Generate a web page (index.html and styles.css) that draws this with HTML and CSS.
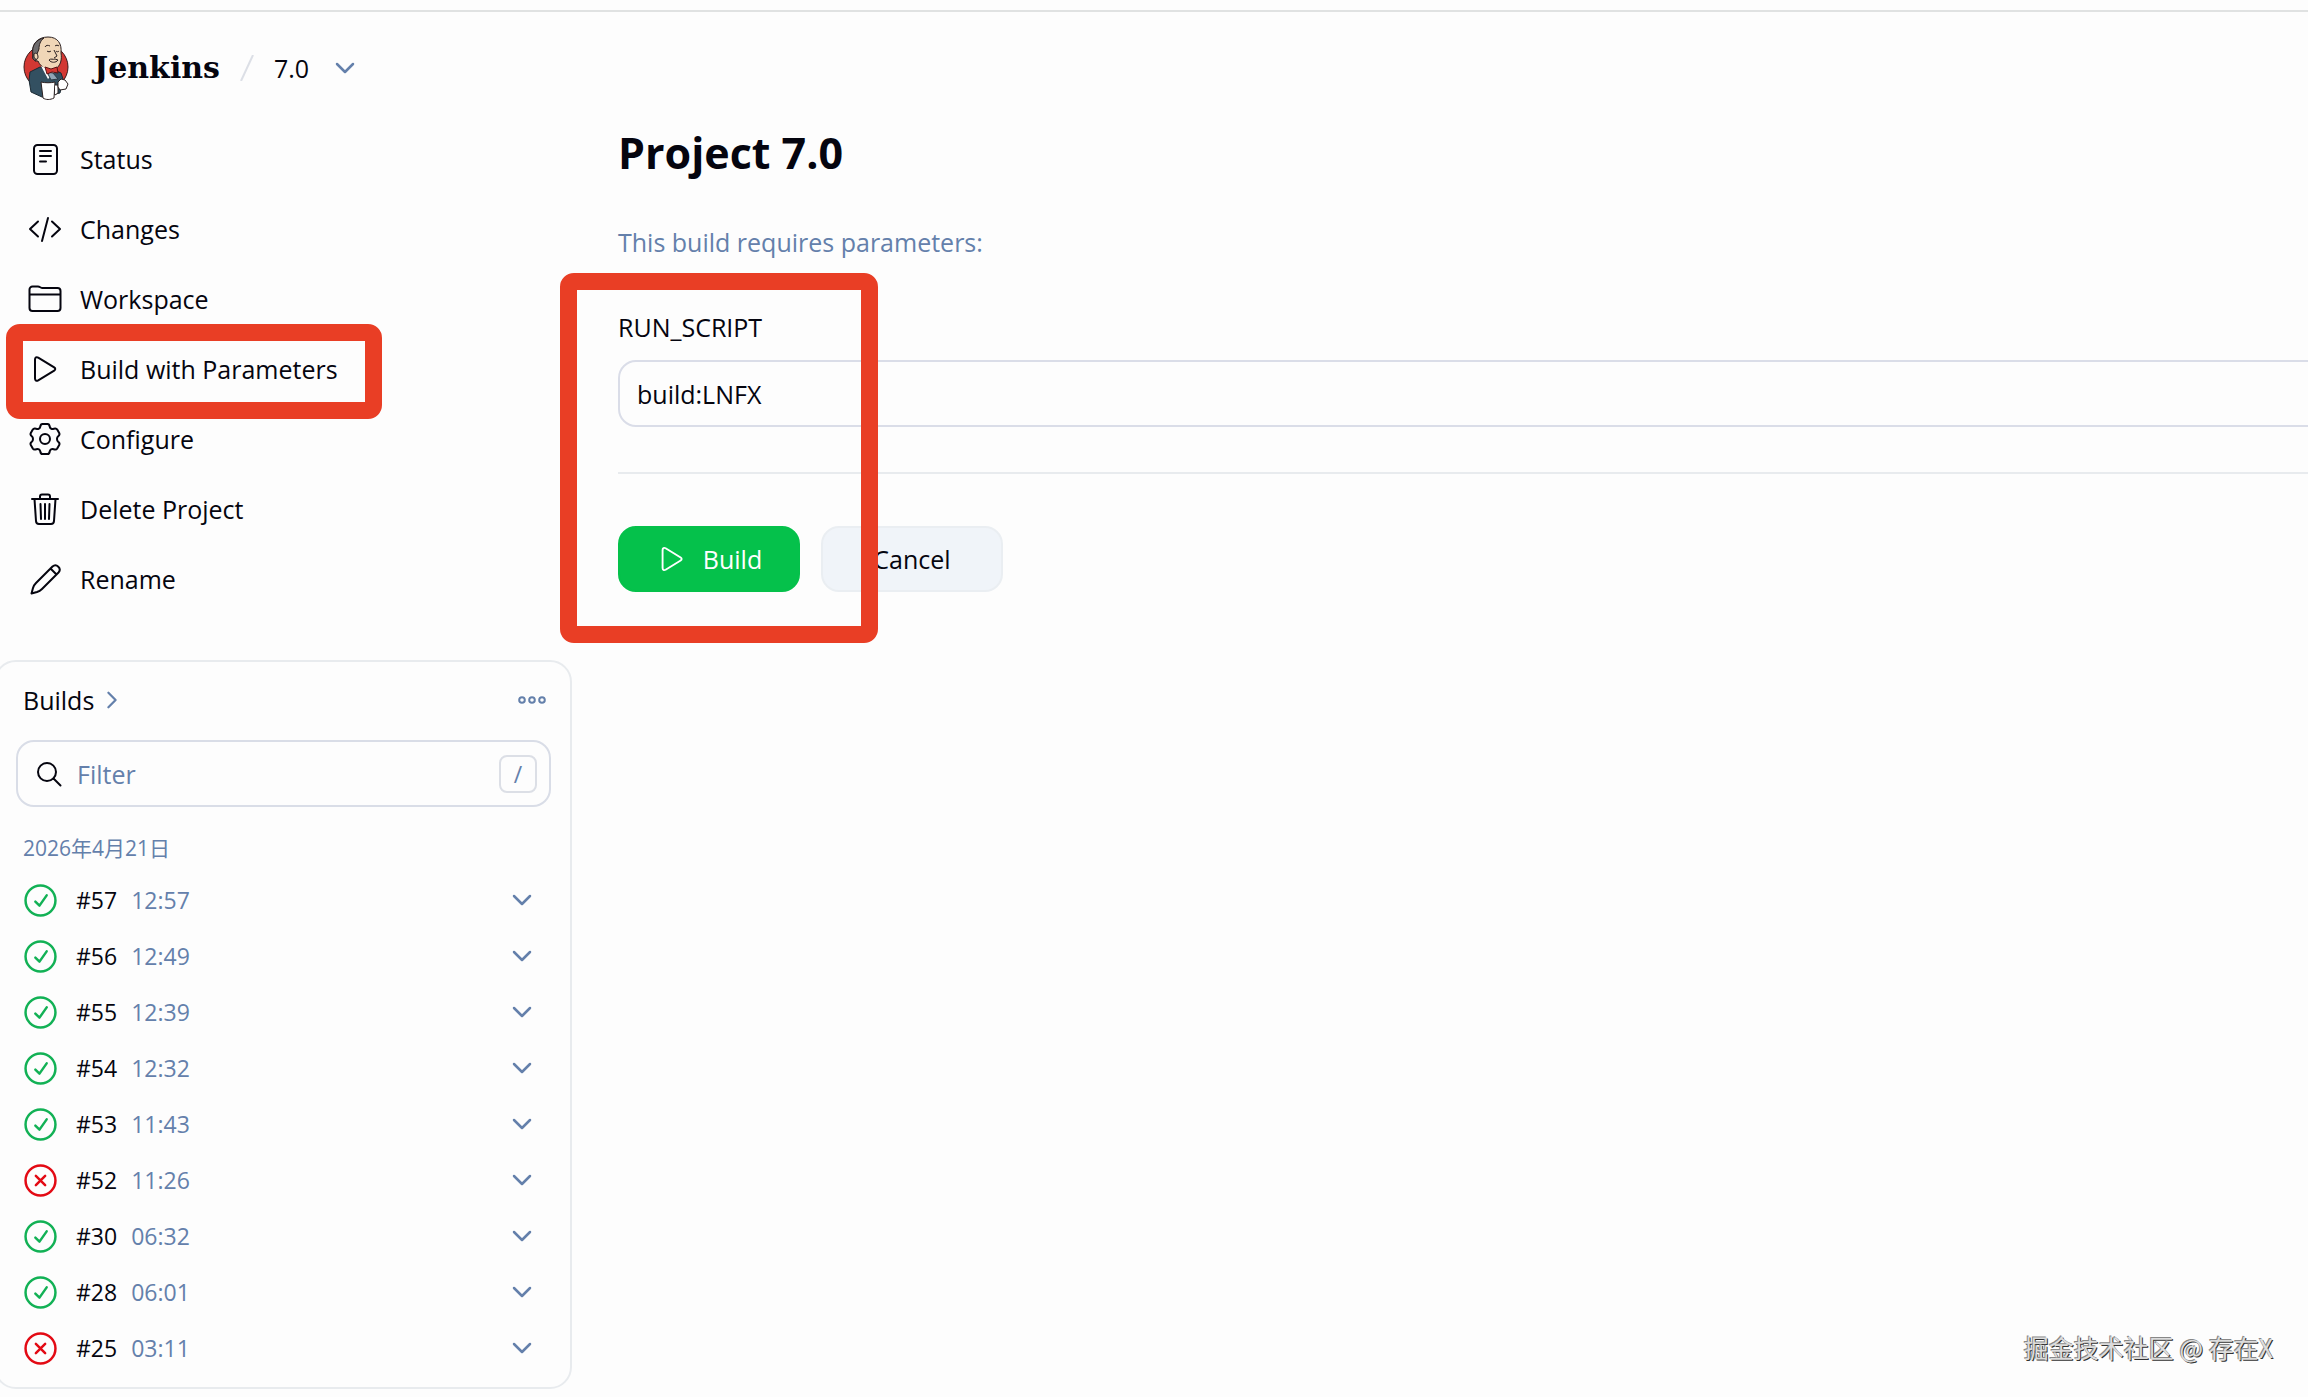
FILE: index.html
```html
<!DOCTYPE html>
<html lang="en">
<head>
  <meta charset="UTF-8" />
  <meta name="viewport" content="width=device-width, initial-scale=1" />
  <title>7.0 - Jenkins</title>
  <link rel="stylesheet" href="styles.css">
</head>
<body>
  <!-- shared icons -->
  <svg class="sprite" aria-hidden="true">
    <symbol id="chevron" viewBox="0 0 20 20"><path d="M2 6l8 8 8-8" /></symbol>
    <symbol id="play" viewBox="0 0 34 34"><path d="M7 7.500v19c0 2 1.500 2.800 3.200 1.900l16-9.800c1.400-.9 1.400-2.300 0-3.200l-16-9.800C8.500 4.700 7 5.500 7 7.500z" /></symbol>
    <symbol id="ok" viewBox="0 0 32 32"><circle cx="16" cy="16" r="14.500" /><path d="M11 17l4 4 7-10" /></symbol>
    <symbol id="fail" viewBox="0 0 32 32"><circle cx="16" cy="16" r="14.500" /><path d="M11.500 11.500l9 9M20.500 11.500l-9 9" /></symbol>
  </svg>

  <header class="header">
    <a href="#" class="brand">
      <svg class="logo" viewBox="0 0 46 64" aria-hidden="true">
        <circle cx="23" cy="31" r="22" fill="#d33833" stroke="#3a1a1a" stroke-width="1" />
        <path d="M7 36l10-5 12 2 9 4 2 6-3 14-18 4-11-5-2-12z" fill="#335061" stroke="#1b2a33" stroke-width="1" />
        <path d="M10 18C8 8 15 1 25 1c10 0 14 7 13 16 1 6 0 13-6 16-7 2-14-1-17-8-4 1-6-3-5-7z" fill="#f0d6b7" stroke="#2b2020" stroke-width="1" />
        <path d="M10 19C8 9 14 3 21 2c-4 3-5 7-5 11l-2 5-1 7c-3-1-4-3-3-6z" fill="#6d6b6d" stroke="#2b2020" stroke-width="1" />
        <path d="M11 18c2-2 4 0 4 3 0 3-3 3-4 0z" fill="#f0d6b7" stroke="#2b2020" stroke-width="1" />
        <path d="M22 11c1-2 3-2 5-1M32 10c1-1 3-1 4 0M24 15c1 1 3 1 4 0M33 15c1 1 2 1 3 0M31 14l3 6-3 2M26 24c2-2 4 0 6-1l3 1c-2 3-7 3-9 0" fill="none" stroke="#2b2020" stroke-width="1" />
        <path d="M18 30l7 3 7 3-7 7z" fill="#fff" />
        <path d="M24 36l6 1 5 6-7 1z" fill="#8fa5b5" stroke="#2b3a44" stroke-width="1" />
        <path d="M22 31l6 2 6-2 1 6-6-1-5 2z" fill="#d33833" stroke="#5a1212" stroke-width="1" />
        <path d="M18 46c4 1 10 1 14 0l-1 16c-4 2-8 2-11 0z" fill="#fff" stroke="#2b2020" stroke-width="1" />
        <path d="M32 49h3v8l-3 2" fill="#fff" stroke="#2b2020" stroke-width="1" />
        <path d="M35 46l3-3 4 1 3 4-2 5-6 1-2-3z" fill="#fff" stroke="#2b2020" stroke-width="1" />
      </svg>
      Jenkins
    </a>
    <svg class="slash" viewBox="0 0 14 26" aria-hidden="true"><path d="M13 0L1 26" /></svg>
    <a href="#" class="crumb">7.0</a>
    <button class="icon-button" aria-label="Project menu"><svg class="icon chevron"><use href="#chevron" /></svg></button>
  </header>

  <div class="page">
    <aside class="sidebar">
      <nav class="tasks">
        <a href="#" class="task">
          <svg class="icon" viewBox="0 0 34 34"><rect x="6" y="3" width="23" height="29" rx="3.500" /><path d="M12 9h11M12 14h11M12 19.500h6" /></svg>
          Status
        </a>
        <a href="#" class="task">
          <svg class="icon" viewBox="0 0 34 34"><path d="M10 9.500L2 17l8 7.500M24 9.500l8 7.500-8 7.500M20 6l-6 23" /></svg>
          Changes
        </a>
        <a href="#" class="task">
          <svg class="icon" viewBox="0 0 34 34"><path d="M1.500 25.500v-18a3 3 0 0 1 3-3h5.500c2 0 2.500 1.500 4.500 1.500h15a3 3 0 0 1 3 3v17a3 3 0 0 1-3 3h-25a3 3 0 0 1-3-3zM1.500 12.500h31" /></svg>
          Workspace
        </a>
        <a href="#" class="task marked">
          <svg class="icon"><use href="#play" /></svg>
          Build with Parameters
        </a>
        <a href="#" class="task">
          <svg class="icon" viewBox="0 0 34 34"><circle cx="17" cy="17" r="5" /><path d="M14.500 2h5c1.500 0 2 1 2.200 2.500.3 2 2 3 4 2.300 1.500-.6 2.700-.6 3.500.7l2 3.500c.7 1.300.2 2.300-1 3.200-1.600 1.300-1.600 4.300 0 5.600 1.200.9 1.700 1.900 1 3.200l-2 3.500c-.8 1.300-2 1.300-3.500.7-2-.7-3.700.3-4 2.300-.2 1.500-.7 2.500-2.200 2.500h-5c-1.500 0-2-1-2.200-2.500-.3-2-2-3-4-2.300-1.500.6-2.700.6-3.500-.7l-2-3.500c-.7-1.300-.2-2.300 1-3.200 1.600-1.300 1.600-4.300 0-5.600-1.200-.9-1.700-1.900-1-3.200l2-3.500c.8-1.300 2-1.300 3.500-.7 2 .7 3.700-.3 4-2.300C12.500 3 13 2 14.500 2z" /></svg>
          Configure
        </a>
        <a href="#" class="task">
          <svg class="icon" viewBox="0 0 34 34"><path d="M4 7h26M12 7V4.500C12 3 13 2.500 14 2.500h6c1 0 2 .5 2 2V7M6.500 7l1.500 22c.1 2 1 3 3 3h12c2 0 2.900-1 3-3L27.500 7M12.500 12l.5 15M17 12v15M21.500 12L21 27" /></svg>
          Delete Project
        </a>
        <a href="#" class="task">
          <svg class="icon" viewBox="0 0 34 34"><path d="M22.500 6.500L8 21c-1.500 1.500-2.500 3-3 5l-1.500 5.500L9 30c2-.6 3.500-1.500 5-3l14.500-14.500 2-2c3.500-4-2-9.500-6-6zM22.500 6.500l6 6" /></svg>
          Rename
        </a>
      </nav>

      <section class="builds">
        <div class="builds-head">
          <a href="#" class="builds-title">Builds <svg class="icon next"><use href="#chevron" /></svg></a>
          <button class="icon-button" aria-label="More actions">
            <svg class="icon dots" viewBox="0 0 28 10"><circle cx="4" cy="5" r="2.800" /><circle cx="14" cy="5" r="2.800" /><circle cx="24" cy="5" r="2.800" /></svg>
          </button>
        </div>
        <div class="search">
          <svg class="icon search-icon" viewBox="0 0 26 26"><circle cx="11" cy="11" r="9" /><path d="M17.500 17.500l7 7" /></svg>
          <input type="search" placeholder="Filter" aria-label="Filter builds" />
          <kbd>/</kbd>
        </div>
        <h2 class="date">2026年4月21日</h2>
        <ul class="build-list">
          <li><svg class="icon ok"><use href="#ok" /></svg><a href="#">#57</a><time>12:57</time><button class="icon-button" aria-label="Menu for #57"><svg class="icon chevron"><use href="#chevron" /></svg></button></li>
          <li><svg class="icon ok"><use href="#ok" /></svg><a href="#">#56</a><time>12:49</time><button class="icon-button" aria-label="Menu for #56"><svg class="icon chevron"><use href="#chevron" /></svg></button></li>
          <li><svg class="icon ok"><use href="#ok" /></svg><a href="#">#55</a><time>12:39</time><button class="icon-button" aria-label="Menu for #55"><svg class="icon chevron"><use href="#chevron" /></svg></button></li>
          <li><svg class="icon ok"><use href="#ok" /></svg><a href="#">#54</a><time>12:32</time><button class="icon-button" aria-label="Menu for #54"><svg class="icon chevron"><use href="#chevron" /></svg></button></li>
          <li><svg class="icon ok"><use href="#ok" /></svg><a href="#">#53</a><time>11:43</time><button class="icon-button" aria-label="Menu for #53"><svg class="icon chevron"><use href="#chevron" /></svg></button></li>
          <li><svg class="icon fail"><use href="#fail" /></svg><a href="#">#52</a><time>11:26</time><button class="icon-button" aria-label="Menu for #52"><svg class="icon chevron"><use href="#chevron" /></svg></button></li>
          <li><svg class="icon ok"><use href="#ok" /></svg><a href="#">#30</a><time>06:32</time><button class="icon-button" aria-label="Menu for #30"><svg class="icon chevron"><use href="#chevron" /></svg></button></li>
          <li><svg class="icon ok"><use href="#ok" /></svg><a href="#">#28</a><time>06:01</time><button class="icon-button" aria-label="Menu for #28"><svg class="icon chevron"><use href="#chevron" /></svg></button></li>
          <li><svg class="icon fail"><use href="#fail" /></svg><a href="#">#25</a><time>03:11</time><button class="icon-button" aria-label="Menu for #25"><svg class="icon chevron"><use href="#chevron" /></svg></button></li>
        </ul>
      </section>
    </aside>

    <main class="main">
      <h1>Project 7.0</h1>
      <p class="hint">This build requires parameters:</p>
      <form class="params" onsubmit="return false">
        <label for="run-script">RUN_SCRIPT</label>
        <input type="text" id="run-script" value="build:LNFX" />
        <div class="actions">
          <button type="submit" class="button primary"><svg class="icon"><use href="#play" /></svg>Build</button>
          <button type="button" class="button">Cancel</button>
        </div>
      </form>
    </main>
  </div>

  <div class="watermark">掘金技术社区 @ 存在X</div>
</body>
</html>
```
FILE: styles.css
```css
* {
  box-sizing: border-box;
}
body {
  margin: 0;
  padding-top: 10px;
  min-height: 100vh;
  overflow-x: hidden;
  background: #fdfdfd;
  color: #05050f;
  font-family: "Open Sans", "Noto Sans CJK SC", sans-serif;
  font-size: 25px;
  line-height: 34px;
}
a {
  color: inherit;
  text-decoration: none;
}
input,
button {
  font: inherit;
  color: inherit;
}
.sprite {
  position: absolute;
  width: 0;
  height: 0;
}
.icon {
  flex: none;
  width: 34px;
  height: 34px;
  fill: none;
  stroke: currentColor;
  stroke-width: 2;
  stroke-linecap: round;
  stroke-linejoin: round;
}
.icon-button {
  display: flex;
  padding: 0;
  border: 0;
  background: none;
  color: #6480ab;
  cursor: pointer;
}

/* header */
.header {
  display: flex;
  align-items: center;
  height: 114px;
  padding: 0 23px;
  border-top: 2px solid #e0e2e2;
}
.brand {
  display: flex;
  align-items: center;
  gap: 25px;
  font-family: "DejaVu Serif", serif;
  font-size: 30px;
  font-weight: bold;
}
.logo {
  width: 46px;
  height: 64px;
}
.slash {
  width: 14px;
  height: 26px;
  margin: 0 20px;
  stroke: #dcdfe6;
  stroke-width: 2;
}
.crumb {
  margin-right: 26px;
}
.chevron {
  width: 20px;
  height: 20px;
  stroke-width: 2.5;
}

/* layout */
.page {
  display: grid;
  grid-template-columns: 572px 1fr;
  column-gap: 46px;
}
.task {
  position: relative;
  display: flex;
  align-items: center;
  gap: 18px;
  height: 70px;
  padding-left: 28px;
}
.marked::after,
.params::after {
  content: "";
  position: absolute;
  box-sizing: border-box;
  border: 17px solid #e93e25;
  border-radius: 14px;
  pointer-events: none;
}
.marked::after {
  top: -10px;
  left: 6px;
  width: 376px;
  height: 95px;
}

/* builds */
.builds {
  margin: 46px 0 0 -6px;
  padding: 0 19px 11px 20px;
  border: 2px solid #e8ebee;
  border-radius: 22px;
}
.builds-head {
  display: flex;
  justify-content: space-between;
  align-items: center;
  height: 78px;
  padding: 0 5px 2px 7px;
}
.builds-title {
  display: flex;
  align-items: center;
  gap: 9px;
}
.next {
  width: 18px;
  height: 18px;
  color: #6480ab;
  stroke-width: 2.5;
  transform: rotate(-90deg);
}
.dots {
  width: 28px;
  height: 10px;
}
.search {
  display: flex;
  align-items: center;
  gap: 15px;
  height: 67px;
  padding: 0 12px 0 18px;
  border: 2px solid #d9dde7;
  border-radius: 18px;
}
.search-icon {
  width: 26px;
  height: 26px;
}
.search input {
  flex: 1;
  min-width: 0;
  padding: 0;
  border: 0;
  outline: 0;
  background: none;
}
.search input::placeholder {
  color: #6480ab;
  opacity: 1;
}
kbd {
  width: 38px;
  height: 38px;
  border: 2px solid #dcdfe6;
  border-radius: 8px;
  color: #6480ab;
  font-family: inherit;
  font-size: 23px;
  line-height: 34px;
  text-align: center;
}
.date {
  margin: 24px 0 7px 7px;
  color: #6480ab;
  font-size: 21px;
  font-weight: normal;
}
.build-list {
  margin: 0;
  padding: 0 19px 0 8px;
  list-style: none;
  font-size: 23px;
}
.build-list li {
  display: flex;
  align-items: center;
  height: 56px;
}
.build-list a {
  margin: 0 14px 0 19px;
}
.build-list time {
  flex: 1;
  color: #6480ab;
}
.ok,
.fail {
  width: 33px;
  height: 33px;
  color: #12b155;
  stroke-width: 2.4;
}
.fail {
  color: #e30a14;
}

/* main form */
h1 {
  margin: 0;
  font-size: 43px;
  line-height: 58px;
}
.hint {
  margin: 43px 0 0;
  color: #6480ab;
}
.params {
  position: relative;
  display: flex;
  flex-direction: column;
  margin: 51px -40px 0 0;
}
.params::after {
  top: -37px;
  left: -58px;
  width: 318px;
  height: 370px;
}
.params input {
  height: 67px;
  margin-top: 16px;
  padding: 0 17px;
  border: 2px solid #dadde8;
  border-radius: 18px;
  background: none;
}
.actions {
  display: flex;
  gap: 21px;
  margin-top: 45px;
  padding-top: 52px;
  border-top: 2px solid #e8ebee;
}
.button {
  display: flex;
  justify-content: center;
  align-items: center;
  gap: 15px;
  width: 182px;
  height: 66px;
  border: 2px solid #eaeef2;
  border-radius: 18px;
  background: #f0f4f9;
}
.primary {
  border-color: #05c14b;
  background: #05c14b;
  color: #fff;
}
.primary .icon {
  width: 32px;
  height: 32px;
}

.watermark {
  position: absolute;
  right: 35px;
  bottom: 33px;
  color: #dcdcdc;
  font-family: "Noto Sans CJK SC", sans-serif;
  text-shadow: -1px -1px #888, 1px 1px #333;
}
```
